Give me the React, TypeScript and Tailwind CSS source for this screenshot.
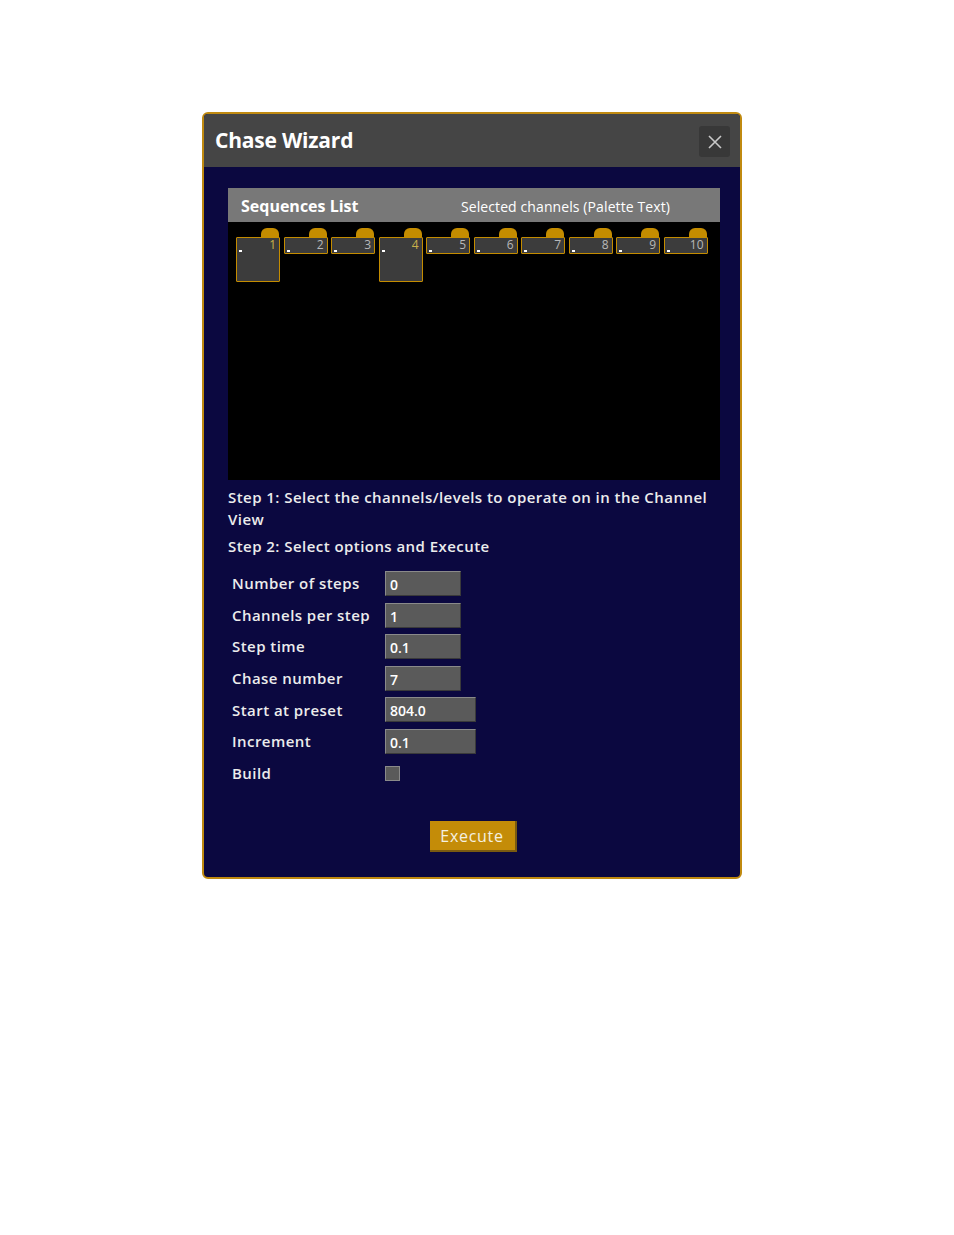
import React from 'react';

const FONT = { fontFamily: '"Open Sans", "DejaVu Sans", sans-serif' };

const tiles = [
  { n: 1, tall: true },
  { n: 2 },
  { n: 3 },
  { n: 4, tall: true },
  { n: 5 },
  { n: 6 },
  { n: 7 },
  { n: 8 },
  { n: 9 },
  { n: 10 },
];

const fields = [
  { label: 'Number of steps', value: '0', wide: false },
  { label: 'Channels per step', value: '1', wide: false },
  { label: 'Step time', value: '0.1', wide: false },
  { label: 'Chase number', value: '7', wide: false },
  { label: 'Start at preset', value: '804.0', wide: true },
  { label: 'Increment', value: '0.1', wide: true },
];

function Tile({ n, tall }: { n: number; tall?: boolean }) {
  return (
    <div className="flex flex-col w-[44px] shrink-0">
      <div className="flex justify-end pr-[1px]">
        <div className="w-[18px] h-[9px] bg-[#c48c00] rounded-t-[6px]" />
      </div>
      <div
        className={`relative border border-[#c48c00] bg-[#3c3c3c] rounded-[1px] ${tall ? 'h-[45px]' : 'h-[17px]'}`}
      >
        <span
          className={`absolute right-[3px] top-[-1px] text-[12px] leading-[15px] ${tall ? 'text-[#c8b04a]' : 'text-[#b8b8b8]'}`}
        >
          {n}
        </span>
        <div className="absolute left-[2px] top-[12px] w-[3px] h-[2px] bg-white" />
      </div>
    </div>
  );
}

export default function App() {
  return (
    <div className="min-h-[1235px] bg-white pt-[112px] pl-[202px]" style={FONT}>
      <div className="w-[540px] h-[767px] border-2 border-[#c08a10] rounded-[6px] overflow-hidden flex flex-col bg-[#0b0840]">
        {/* title bar */}
        <div className="h-[53px] bg-[#454545] flex items-center justify-between pl-[11px] pr-[10px] shrink-0">
          <h1 className="text-[21px] font-bold text-white tracking-[-0.2px]">Chase Wizard</h1>
          <button className="w-[31px] h-[31px] mt-[2px] rounded-[3px] bg-[#383838] flex items-center justify-center">
            <svg width="16" height="16" viewBox="0 0 16 16">
              <path d="M2 2 L14 14 M14 2 L2 14" stroke="#c8c8c8" strokeWidth="1.6" />
            </svg>
          </button>
        </div>

        {/* body */}
        <div className="flex-1 pl-[24px] pr-[20px] pt-[21px] flex flex-col">
          <div className="flex flex-col">
            <div className="h-[34px] bg-[#787878] flex items-center justify-between pl-[13px] pr-[50px] pt-[2px]">
              <span className="text-[16px] font-bold text-white">Sequences List</span>
              <span className="text-[14px] text-white tracking-[0.1px]">Selected channels (Palette Text)</span>
            </div>
            <div className="h-[258px] bg-black pl-[8px] pt-[6px] flex items-start gap-[3.5px]">
              {tiles.map((t) => (
                <Tile key={t.n} n={t.n} tall={t.tall} />
              ))}
            </div>
          </div>

          <div className="pt-[6px] text-[15px] font-semibold text-[#ececec] leading-[22px] tracking-[0.45px]">
            <p>Step 1: Select the channels/levels to operate on in the Channel View</p>
            <p className="mt-[5px]">Step 2: Select options and Execute</p>
          </div>

          <div className="mt-[14px] pl-[4px] flex flex-col gap-[6.6px]">
            {fields.map((f) => (
              <div key={f.label} className="flex items-center">
                <span className="w-[153px] text-[15px] font-semibold text-[#ececec] tracking-[0.45px]">
                  {f.label}
                </span>
                <div
                  className={`h-[25px] bg-[#5a5a5a] border border-[#8a8a8a] border-b-[#3a3a3a] border-r-[#3a3a3a] flex items-end pl-[4px] text-[14px] font-semibold text-white ${f.wide ? 'w-[91px]' : 'w-[76px]'}`}
                >
                  {f.value}
                </div>
              </div>
            ))}
            <div className="flex items-center h-[25px]">
              <span className="w-[153px] text-[15px] font-semibold text-[#ececec] tracking-[0.45px]">Build</span>
              <div className="w-[15px] h-[15px] bg-[#5a5a5a] border border-[#8a8a8a]" />
            </div>
          </div>

          <div className="mt-[35px] flex justify-center pr-[2px]">
            <button className="w-[87px] h-[31px] pt-[2px] bg-[#c48c08] border-b-2 border-r-2 border-[#7a5a10] text-[16px] font-medium text-[#f4f0e0] tracking-[0.7px]">
              Execute
            </button>
          </div>
        </div>
      </div>
    </div>
  );
}
